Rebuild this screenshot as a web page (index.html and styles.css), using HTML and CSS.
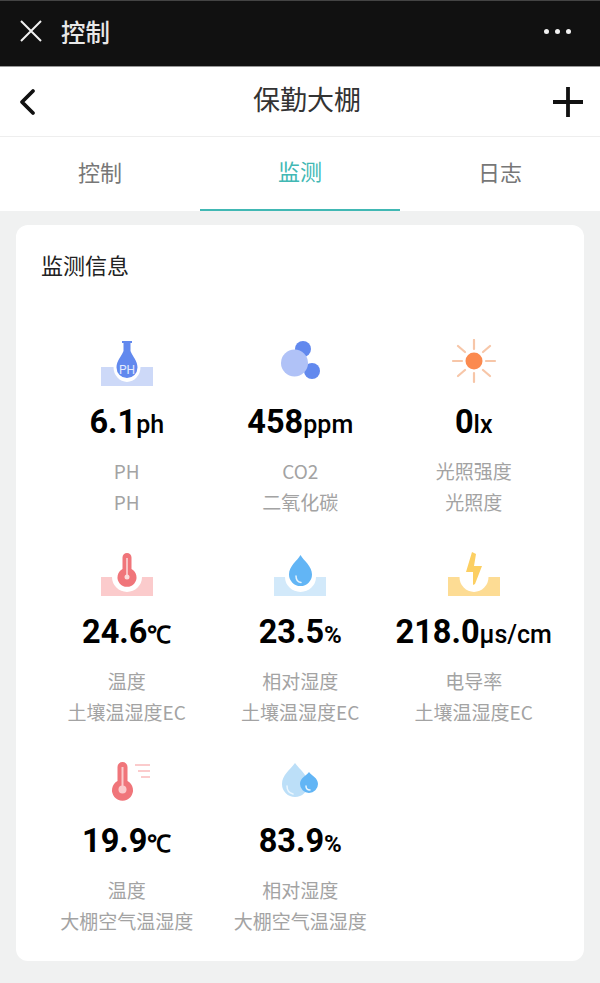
FILE: index.html
```html
<!DOCTYPE html>
<html>
<head lang="en">
    <meta charset="UTF-8">
    <title>控制</title>
    <link rel="stylesheet" href="styles.css">
</head>
<body>
<div class="topbar">
    <svg class="topbar_close" width="24" height="24" viewBox="0 0 24 24"><path d="M2 2L22 22M22 2L2 22" stroke="#f2f2f2" stroke-width="2" fill="none"/></svg>
    <div class="topbar_title">控制</div>
    <div class="topbar_more"><i></i><i></i><i></i></div>
</div>
<div class="nav">
    <svg width="18" height="28" viewBox="0 0 18 28"><path d="M15 3L4 14L15 25" stroke="#111" stroke-width="3.800" fill="none" stroke-linecap="round" stroke-linejoin="round"/></svg>
    <div class="nav_title">保勤大棚</div>
    <svg width="32" height="32" viewBox="0 0 32 32"><path d="M16 1V31M1 16H31" stroke="#111" stroke-width="3.800" fill="none"/></svg>
</div>
<ul class="tabs">
    <li>控制</li>
    <li class="active">监测</li>
    <li>日志</li>
</ul>
<div class="content">
    <div class="card">
        <div class="card_title">监测信息</div>
        <div class="grid">
            <div class="item">
                <svg class="icon" width="60" height="50" viewBox="0 0 60 50">
                    <path d="M4 28H16.500A13.500 15 0 0 0 43.500 28H56V47H4Z" fill="#cdd9f8"/>
                    <path d="M25 2H35V4H33.500V12C36 18 40.500 22 40.500 28.500A10.500 10.500 0 0 1 19.500 28.500C19.500 22 24 18 26.500 12V4H25Z" fill="#6289ee"/>
                    <text x="30" y="35" class="icon_text">PH</text>
                </svg>
                <div class="value">6.1<span class="unit">ph</span></div>
                <div class="label">PH</div>
                <div class="label">PH</div>
            </div>
            <div class="item">
                <svg class="icon" width="60" height="50" viewBox="0 0 60 50">
                    <circle cx="33" cy="10" r="8" fill="#6289ee"/>
                    <circle cx="42" cy="32" r="8" fill="#6289ee"/>
                    <circle cx="24.500" cy="24" r="13.500" fill="#b0c2f7"/>
                </svg>
                <div class="value">458<span class="unit">ppm</span></div>
                <div class="label">CO2</div>
                <div class="label">二氧化碳</div>
            </div>
            <div class="item">
                <svg class="icon" width="60" height="50" viewBox="0 0 60 50">
                    <circle cx="30" cy="22" r="8.500" fill="#fb8a4f"/>
                    <path d="M30 1V10M30 34V43M9 22H18M42 22H51M14 7L21 13M39 31L46 37M46 7L39 13M21 31L14 37" stroke="#f7c6a8" stroke-width="2.200" fill="none" stroke-linecap="round"/>
                </svg>
                <div class="value">0<span class="unit">lx</span></div>
                <div class="label">光照强度</div>
                <div class="label">光照度</div>
            </div>
            <div class="item">
                <svg class="icon" width="60" height="50" viewBox="0 0 60 50">
                    <path d="M4 28H15A15 15 0 0 0 45 28H56V47H4Z" fill="#fbcbcc"/>
                    <path d="M25.500 8.500A4.500 4.500 0 0 1 34.500 8.500V20A9.500 9.500 0 1 1 25.500 20Z" fill="#f0757a"/>
                    <path d="M30 9V27" stroke="#fbdcdc" stroke-width="1.500"/>
                    <circle cx="30" cy="28" r="2.500" fill="#fbdcdc"/>
                </svg>
                <div class="value">24.6<span class="unit unit_bold">℃</span></div>
                <div class="label">温度</div>
                <div class="label">土壤温湿度EC</div>
            </div>
            <div class="item">
                <svg class="icon" width="60" height="50" viewBox="0 0 60 50">
                    <path d="M4 28H15A15.500 15 0 0 0 46 28H56V47H4Z" fill="#d2e9fa"/>
                    <path d="M30.500 6C34 12 42 17 42 25.500A11.500 11.500 0 0 1 19 25.500C19 17 27 12 30.500 6Z" fill="#62b5f5"/>
                    <path d="M26 27C26 31 28 33 31 33.500" stroke="#e4f3fd" stroke-width="1.500" fill="none" stroke-linecap="round"/>
                </svg>
                <div class="value">23.5<span class="unit unit_bold">%</span></div>
                <div class="label">相对湿度</div>
                <div class="label">土壤温湿度EC</div>
            </div>
            <div class="item">
                <svg class="icon" width="60" height="50" viewBox="0 0 60 50">
                    <path d="M4 28H15.500A14.500 15 0 0 0 44.500 28H56V47H4Z" fill="#fddc94"/>
                    <path d="M28 3L32 5L30 17H38L31 35L29 36L29 23H22Z" fill="#fccf62"/>
                </svg>
                <div class="value">218.0<span class="unit">μs/cm</span></div>
                <div class="label">电导率</div>
                <div class="label">土壤温湿度EC</div>
            </div>
            <div class="item">
                <svg class="icon" width="60" height="50" viewBox="0 0 60 50">
                    <path d="M20.500 9A5 5 0 0 1 30.500 9V23A10.500 10.500 0 1 1 20.500 23Z" fill="#f0757a"/>
                    <path d="M25.500 9V30" stroke="#fbcbcc" stroke-width="2"/>
                    <circle cx="25.500" cy="31.500" r="4" fill="#fbcbcc"/>
                    <path d="M38 7H53M41 13H53M44 19H53" stroke="#fbcbcc" stroke-width="1.800" fill="none"/>
                </svg>
                <div class="value">19.9<span class="unit unit_bold">℃</span></div>
                <div class="label">温度</div>
                <div class="label">大棚空气温湿度</div>
            </div>
            <div class="item">
                <svg class="icon" width="60" height="50" viewBox="0 0 60 50">
                    <path d="M25 5C30 12 38 17 38 26A13 13 0 0 1 12 26C12 17 20 12 25 5Z" fill="#bcdff8"/>
                    <path d="M39 14C42 18 48 20 48 26A9 9 0 0 1 30 26C30 20 36 18 39 14Z" fill="#62b5f5"/>
                    <path d="M17 28C17 32 19 35 23 36M36 28C36 31 38 32 40 32" stroke="#eaf6fe" stroke-width="1.500" fill="none" stroke-linecap="round"/>
                </svg>
                <div class="value">83.9<span class="unit unit_bold">%</span></div>
                <div class="label">相对湿度</div>
                <div class="label">大棚空气温湿度</div>
            </div>
        </div>
    </div>
</div>
</body>
</html>
```
FILE: styles.css
```css
* {
    box-sizing: border-box;
}
html, body {
    margin: 0;
    padding: 0;
}
body {
    width: 600px;
    height: 983px;
    overflow: hidden;
    background: #f0f1f1;
    font-family: "Noto Sans CJK SC", Roboto, sans-serif;
}
.topbar {
    height: 67px;
    padding: 0 29px 5px 19px;
    display: flex;
    align-items: center;
    background: #111;
    border-top: 1px solid #444;
    border-bottom: 1px solid #999;
    color: #e8e8e8;
}
.topbar_title {
    margin-left: 18px;
    font-size: 24.500px;
    font-weight: 500;
}
.topbar_more {
    margin-left: auto;
    display: flex;
    gap: 6px;
}
.topbar_more i {
    width: 5px;
    height: 5px;
    border-radius: 50%;
    background: #f2f2f2;
}
.nav {
    height: 70px;
    padding: 0 16px 0 18px;
    display: flex;
    align-items: center;
    justify-content: space-between;
    background: #fff;
    border-bottom: 1px solid #eee;
}
.nav_title {
    margin-top: -6px;
    margin-left: 26px;
    font-size: 27px;
    color: #333;
}
.tabs {
    list-style: none;
    margin: 0;
    padding: 0;
    height: 74px;
    display: flex;
    background: #fff;
}
.tabs li {
    width: 200px;
    padding-bottom: 7px;
    display: flex;
    align-items: center;
    justify-content: center;
    font-size: 22px;
    color: #777;
}
.tabs li.active {
    color: #41b8b4;
    border-bottom: 2px solid #41b8b4;
}
.content {
    padding: 14px 16px 0;
}
.card {
    height: 736px;
    padding: 23px 24px 0 25px;
    background: #fff;
    border-radius: 12px;
}
.card_title {
    line-height: 32px;
    font-size: 22px;
    color: #222;
}
.grid {
    margin-top: 59px;
    margin-left: -1px;
    display: grid;
    grid-template-columns: repeat(3, 173.5px);
    grid-auto-rows: 209.5px;
}
.item {
    display: flex;
    flex-direction: column;
    align-items: center;
    white-space: nowrap;
}
.icon {
    display: block;
    margin-bottom: 14px;
}
.icon_text {
    font-family: Roboto, sans-serif;
    font-size: 12px;
    fill: #e4ebfd;
    text-anchor: middle;
}
.value {
    height: 38px;
    line-height: 38px;
    margin-bottom: 14px;
    font-family: Roboto, sans-serif;
    font-size: 32.500px;
    font-weight: 700;
    color: #000;
}
.unit {
    font-size: 25px;
    font-weight: 500;
}
.unit_bold {
    font-size: 24px;
    font-weight: 700;
}
.label {
    height: 31px;
    line-height: 31px;
    font-size: 19px;
    color: #a3a3a3;
}
```
